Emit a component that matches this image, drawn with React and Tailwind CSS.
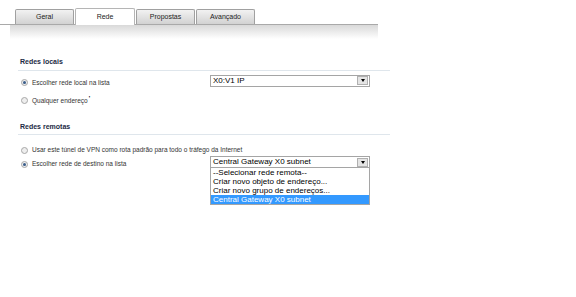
import React from "react";

const tabs = ["Geral", "Rede", "Propostas", "Avançado"];

function Radio({ checked }) {
  return (
    <span className="flex h-[7px] w-[7px] items-center justify-center rounded-full border border-[#a8a8a8] bg-[#eeeeee]">
      {checked && <span className="h-[3px] w-[3px] rounded-full bg-[#3a5d8a]" />}
    </span>
  );
}

function Select({ value }) {
  return (
    <div className="flex h-[12px] w-[160px] items-center justify-between border border-[#a5a5a5] bg-white pl-[2px] pr-[1px]">
      <span className="text-[8px] leading-none text-black">{value}</span>
      <span className="flex h-[9px] w-[11px] items-center justify-center border border-[#b0b0b0] bg-[#e4e4e4]">
        <span className="h-0 w-0 border-x-[2.5px] border-t-[3px] border-x-transparent border-t-black" />
      </span>
    </div>
  );
}

function SectionTitle({ children }) {
  return (
    <div className="ml-[18px] mr-[186px] border-b border-[#dfe6ec] pb-[2px] pl-[2px] text-[7px] font-bold text-[#1c2a44]">
      {children}
    </div>
  );
}

function Option({ checked, label, extra }) {
  return (
    <div className="flex h-[10px] items-center gap-[4px] pl-[21px]">
      <Radio checked={checked} />
      <span className="text-[6.5px] text-[#333]">{label}</span>
      {extra}
    </div>
  );
}

export default function App() {
  const remotes = [
    "--Selecionar rede remota--",
    "Criar novo objeto de endereço...",
    "Criar novo grupo de endereços...",
    "Central Gateway X0 subnet",
  ];

  return (
    <div className="h-[297px] w-[576px] bg-white font-['Liberation_Sans',sans-serif]">
      {/* Tabs */}
      <div className="flex h-[25px] w-[378px] items-end border-b border-[#a9a9a9] pl-[15px]">
        {tabs.map((t) => (
          <div
            key={t}
            className={
              t === "Rede"
                ? "-mb-px mr-px flex h-[17px] w-[60px] items-center justify-center rounded-t-[2px] border border-b-0 border-[#b5b5b5] bg-white text-[7px] text-[#222]"
                : "mr-px flex h-[15px] w-[59px] items-center justify-center rounded-t-[2px] border border-b-0 border-[#a0a0a0] bg-gradient-to-b from-[#f2f2f2] to-[#d2d2d2] text-[7px] text-[#222]"
            }
          >
            {t}
          </div>
        ))}
      </div>
      <div className="ml-[10px] h-[14px] w-[368px] bg-gradient-to-b from-[#d9d9d9] to-white" />

      <div className="pt-[18px]">
        <SectionTitle>Redes locais</SectionTitle>
        <div className="mt-[4px] flex items-start">
          <div className="w-[210px] pt-[3px]">
            <Option checked label="Escolher rede local na lista" />
          </div>
          <Select value="X0:V1 IP" />
        </div>
        <div className="mt-[8px]">
          <Option
            label="Qualquer endereço"
            extra={<span className="-ml-[3px] -mt-[5px] text-[6px] font-bold text-black">'</span>}
          />
        </div>

        <div className="mt-[16px]">
          <SectionTitle>Redes remotas</SectionTitle>
        </div>
        <div className="mt-[10px]">
          <Option label="Usar este túnel de VPN como rota padrão para todo o tráfego da Internet" />
        </div>
        <div className="mt-[1px] flex items-start">
          <div className="w-[210px] pt-[3px]">
            <Option checked label="Escolher rede de destino na lista" />
          </div>
          <div className="relative">
            <Select value="Central Gateway X0 subnet" />
            <div className="absolute left-0 top-[12px] w-[160px] border border-t-0 border-[#a5a5a5] bg-white">
              {remotes.map((r, i) => (
                <div
                  key={r}
                  className={
                    i === 3
                      ? "h-[9px] bg-[#3399ff] pl-[2px] text-[8px] leading-[9px] text-white"
                      : "h-[9px] pl-[2px] text-[8px] leading-[9px] text-black"
                  }
                >
                  {r}
                </div>
              ))}
            </div>
          </div>
        </div>
      </div>
    </div>
  );
}
